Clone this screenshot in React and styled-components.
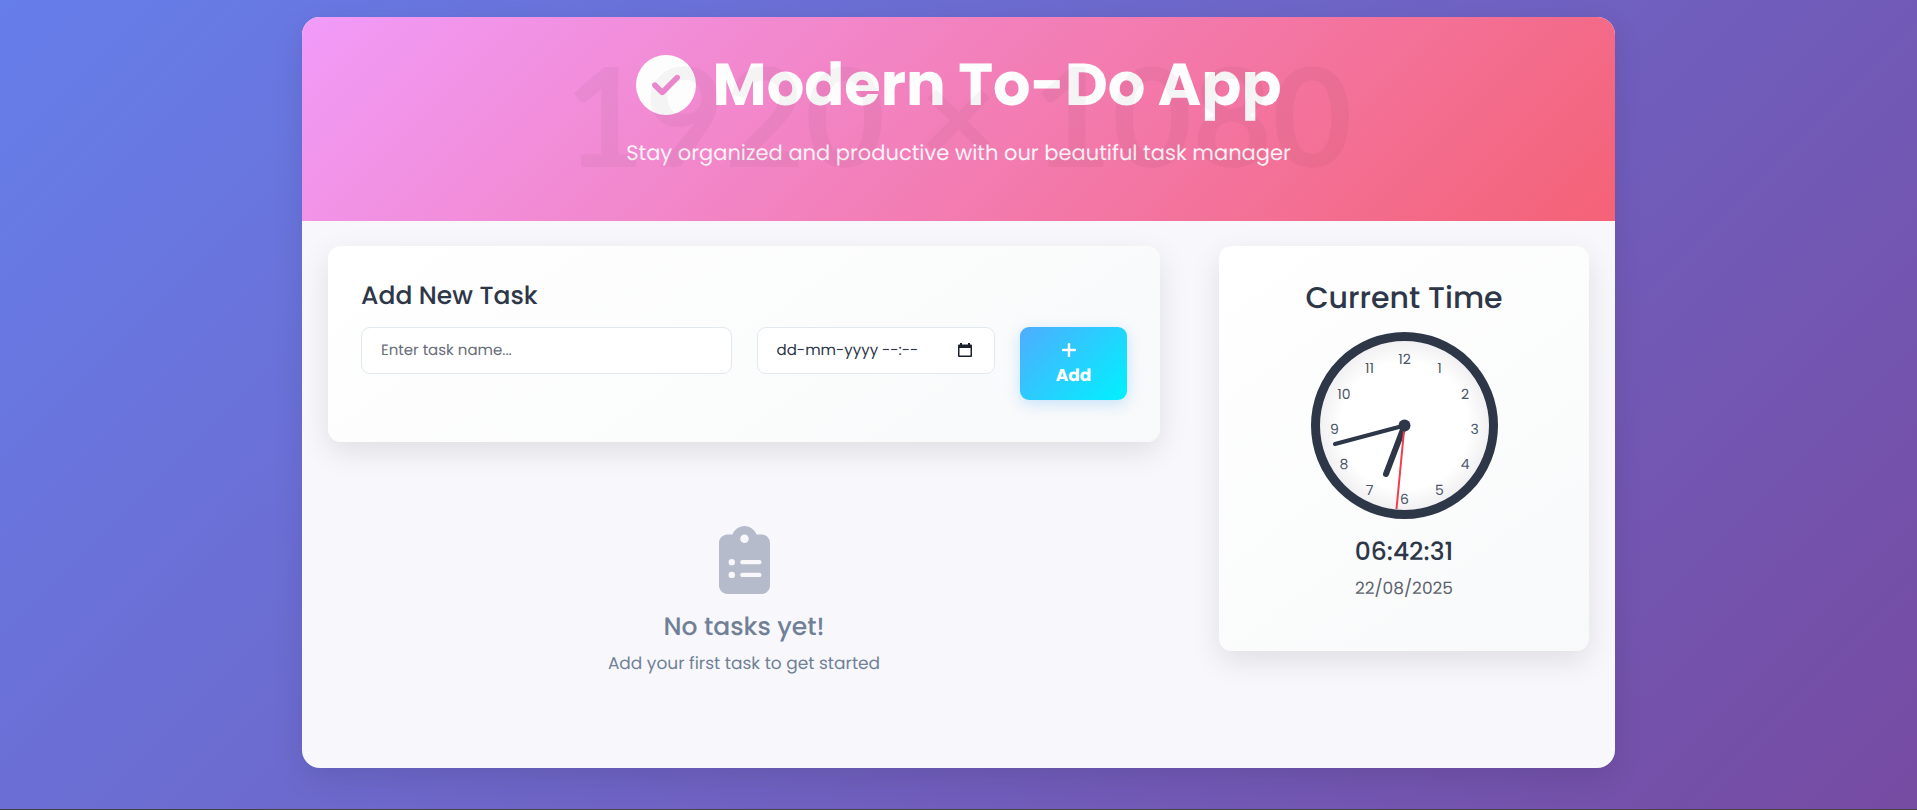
import React from "react";
import styled, { createGlobalStyle } from "styled-components";

const Global = createGlobalStyle`
  *, *::before, *::after { box-sizing: border-box; }
  body {
    margin: 0;
    color: #2d3748;
    font-family: Poppins, Inter, "Liberation Sans", sans-serif;
    font-size: 16px;
    text-rendering: geometricPrecision;
  }
  h1, h2, h3, p { margin: 0; }
  input, button { font: inherit; color: inherit; text-rendering: inherit; }
`;

const Page = styled.div`
  display: flex;
  flex-direction: column;
  min-height: 100vh;
  padding: 17px 24px;
  background: linear-gradient(135deg, #667eea 0%, #764ba2 100%);
  border-bottom: 1px solid #444;
`;

const Shell = styled.main`
  width: 100%;
  max-width: 1313px;
  margin: 0 auto 24px;
  flex: 1;
  overflow: hidden;
  display: flex;
  flex-direction: column;
  border-radius: 18px;
  background: #f8f8fc;
  box-shadow: 0 10px 30px rgba(0, 0, 0, 0.1);
`;

const Header = styled.header`
  position: relative;
  display: flex;
  flex-direction: column;
  align-items: center;
  padding: 32px 24px 52px;
  background: linear-gradient(135deg, #f19bf9 0%, #f46276 100%);
  color: #fff;
  text-align: center;
`;

const Title = styled.h1`
  display: flex;
  align-items: center;
  gap: 17px;
  font-size: 59px;
  font-weight: 700;
  line-height: 72px;
  color: #fdfdfd;
`;

const Subtitle = styled.p`
  margin-top: 18px;
  font-size: 21px;
  line-height: 30px;
  color: #fdf3f9;
`;

const Watermark = styled.span`
  position: absolute;
  inset: 0 0 8px;
  display: flex;
  align-items: center;
  justify-content: center;
  font-family: Lato, sans-serif;
  font-size: 138px;
  font-weight: 700;
  line-height: 1;
  white-space: nowrap;
  color: rgba(0, 0, 0, 0.035);
  pointer-events: none;
`;

const Content = styled.div`
  display: grid;
  grid-template-columns: minmax(0, 832fr) minmax(0, 370fr);
  gap: 59px;
  align-items: start;
  padding: 25px 26px;
`;

const Card = styled.section`
  border-radius: 13px;
  background: linear-gradient(145deg, #ffffff 0%, #f8f9fa 100%);
  box-shadow: 0 10px 30px rgba(0, 0, 0, 0.1);
`;

const TaskCard = styled(Card)`
  padding: 33px 33px 42px;
`;

const ClockCard = styled(Card)`
  display: flex;
  flex-direction: column;
  align-items: center;
  padding: 33px 33px 50px;
`;

const CardTitle = styled.h2`
  font-size: ${(p) => (p.$large ? 30 : 25)}px;
  font-weight: 500;
  line-height: ${(p) => (p.$large ? 38 : 34)}px;
`;

const Form = styled.form`
  display: grid;
  grid-template-columns: minmax(0, 370fr) minmax(0, 238fr) 107px;
  gap: 25px;
  align-items: start;
  margin-top: 14px;
`;

const Field = styled.div`
  display: flex;
  align-items: center;
  height: 47px;
  padding: 0 19px;
  border: 1px solid #e2e8f0;
  border-radius: 9px;
  background: #fff;
`;

const TextInput = styled.input`
  flex: 1;
  min-width: 0;
  padding: 0;
  border: 0;
  outline: 0;
  background: transparent;
  font-size: 15px;
  &::placeholder {
    color: ${(p) => (p.$strong ? "#2d3748" : "#686e78")};
    opacity: 1;
  }
`;

const PickerButton = styled.button`
  display: flex;
  padding: 0;
  margin-right: 3px;
  border: 0;
  background: none;
`;

const AddButton = styled.button`
  display: flex;
  flex-direction: column;
  align-items: center;
  height: 73px;
  padding: 9px 0;
  border: 0;
  border-radius: 9px;
  background: linear-gradient(135deg, #4facfe 0%, #00f2fe 100%);
  box-shadow: 0 4px 15px rgba(79, 172, 254, 0.3);
  color: #fff;
  font-size: 17px;
  font-weight: 700;
  line-height: 26px;
`;

const PlusIcon = styled.svg`
  margin: 7px 9px 5px 0;
`;

const Empty = styled.section`
  display: flex;
  flex-direction: column;
  align-items: center;
  padding: 84px 16px 40px;
  color: #718096;
`;

const EmptyTitle = styled.h3`
  margin-top: 16px;
  font-size: 25px;
  font-weight: 500;
  line-height: 34px;
`;

const SmallText = styled.p`
  margin-top: 6px;
  font-size: 17px;
  line-height: 26px;
`;

const Dial = styled.svg`
  margin-top: 15px;
`;

const Digital = styled.time`
  margin-top: 16px;
  font-size: 25px;
  font-weight: 500;
  line-height: 34px;
`;

const DateText = styled(SmallText)`
  color: #5c636d;
`;

const HOURS = [12, 1, 2, 3, 4, 5, 6, 7, 8, 9, 10, 11];

function CheckCircle() {
  return (
    <svg width="60" height="60" viewBox="0 0 512 512" aria-hidden="true">
      <path
        fill="#fdfdfd"
        d="M256 512A256 256 0 1 0 256 0a256 256 0 1 0 0 512zM369 209L241 337c-9.400 9.400-24.600 9.400-33.900 0l-64-64c-9.400-9.400-9.400-24.600 0-33.900s24.600-9.400 33.900 0l47 47L335 175c9.400-9.400 24.600-9.400 33.900 0s9.400 24.600 0 33.900z"
      />
    </svg>
  );
}

function Clipboard() {
  return (
    <svg width="51" height="68" viewBox="0 0 384 512" aria-hidden="true">
      <path
        fill="#b5bbca"
        d="M192 0c-41.800 0-77.400 26.700-90.500 64H64C28.700 64 0 92.700 0 128v320c0 35.300 28.700 64 64 64h256c35.300 0 64-28.700 64-64V128c0-35.300-28.700-64-64-64h-37.500C269.400 26.700 233.800 0 192 0zm0 64a32 32 0 1 1 0 64 32 32 0 1 1 0-64zM72 272a24 24 0 1 1 48 0 24 24 0 1 1-48 0zm104-16h128c8.800 0 16 7.200 16 16s-7.200 16-16 16H176c-8.800 0-16-7.200-16-16s7.200-16 16-16zM72 368a24 24 0 1 1 48 0 24 24 0 1 1-48 0zm88 0c0-8.800 7.200-16 16-16h128c8.800 0 16 7.200 16 16s-7.200 16-16 16H176c-8.800 0-16-7.200-16-16z"
      />
    </svg>
  );
}

function Clock() {
  return (
    <Dial width="187" height="187" viewBox="0 0 187 187" role="img" aria-label="Clock">
      <defs>
        <radialGradient id="face">
          <stop offset="0.75" stopColor="#ffffff" />
          <stop offset="1" stopColor="#f0f0f2" />
        </radialGradient>
      </defs>
      <circle cx="93.500" cy="93.500" r="85" fill="url(#face)" />
      <g fill="#4a5568" fontSize="14" textAnchor="middle">
        {HOURS.map((hour, i) => {
          const a = (i * Math.PI) / 6;
          return (
            <text key={hour} x={93.5 + 70 * Math.sin(a)} y={102 - 70 * Math.cos(a)}>
              {hour}
            </text>
          );
        })}
      </g>
      <g stroke="#2d3748" strokeLinecap="round">
        <line x1="93.500" y1="93.500" x2="75" y2="142" strokeWidth="6" />
        <line x1="93.500" y1="93.500" x2="24" y2="112" strokeWidth="4" />
      </g>
      <line x1="93.500" y1="93.500" x2="85.500" y2="177" stroke="#f03e4d" strokeWidth="2" />
      <circle cx="93.500" cy="93.500" r="6" fill="#2d3748" />
      <circle cx="93.500" cy="93.500" r="89" fill="none" stroke="#2d3748" strokeWidth="9" />
    </Dial>
  );
}

export default function App() {
  return (
    <>
      <Global />
      <Page>
        <Shell>
          <Header>
            <Title>
              <CheckCircle />
              Modern To-Do App
            </Title>
            <Subtitle>Stay organized and productive with our beautiful task manager</Subtitle>
            <Watermark>1920 × 1080</Watermark>
          </Header>
          <Content>
            <div>
              <TaskCard>
                <CardTitle>Add New Task</CardTitle>
                <Form onSubmit={(e) => e.preventDefault()}>
                  <Field>
                    <TextInput type="text" aria-label="Task name" placeholder="Enter task name..." />
                  </Field>
                  <Field>
                    <TextInput $strong type="text" aria-label="Due date" placeholder="dd-mm-yyyy --:--" />
                    <PickerButton type="button" aria-label="Pick a date">
                      <svg width="14" height="15" viewBox="0 0 14 15" fill="#1a202c" aria-hidden="true">
                        <path
                          fillRule="evenodd"
                          d="M2 0h2v1.500h6V0h2v1.500h1q1 0 1 1V13q0 1-1 1H1q-1 0-1-1V2.500q0-1 1-1h1zM1.500 5v7.500h11V5z"
                        />
                      </svg>
                    </PickerButton>
                  </Field>
                  <AddButton type="submit">
                    <PlusIcon width="14" height="14" viewBox="0 0 14 14" aria-hidden="true">
                      <path d="M7 1v12M1 7h12" stroke="#fff" strokeWidth="2.400" strokeLinecap="round" />
                    </PlusIcon>
                    Add
                  </AddButton>
                </Form>
              </TaskCard>
              <Empty>
                <Clipboard />
                <EmptyTitle>No tasks yet!</EmptyTitle>
                <SmallText>Add your first task to get started</SmallText>
              </Empty>
            </div>
            <ClockCard>
              <CardTitle $large>Current Time</CardTitle>
              <Clock />
              <Digital>06:42:31</Digital>
              <DateText as="time">22/08/2025</DateText>
            </ClockCard>
          </Content>
        </Shell>
      </Page>
    </>
  );
}
